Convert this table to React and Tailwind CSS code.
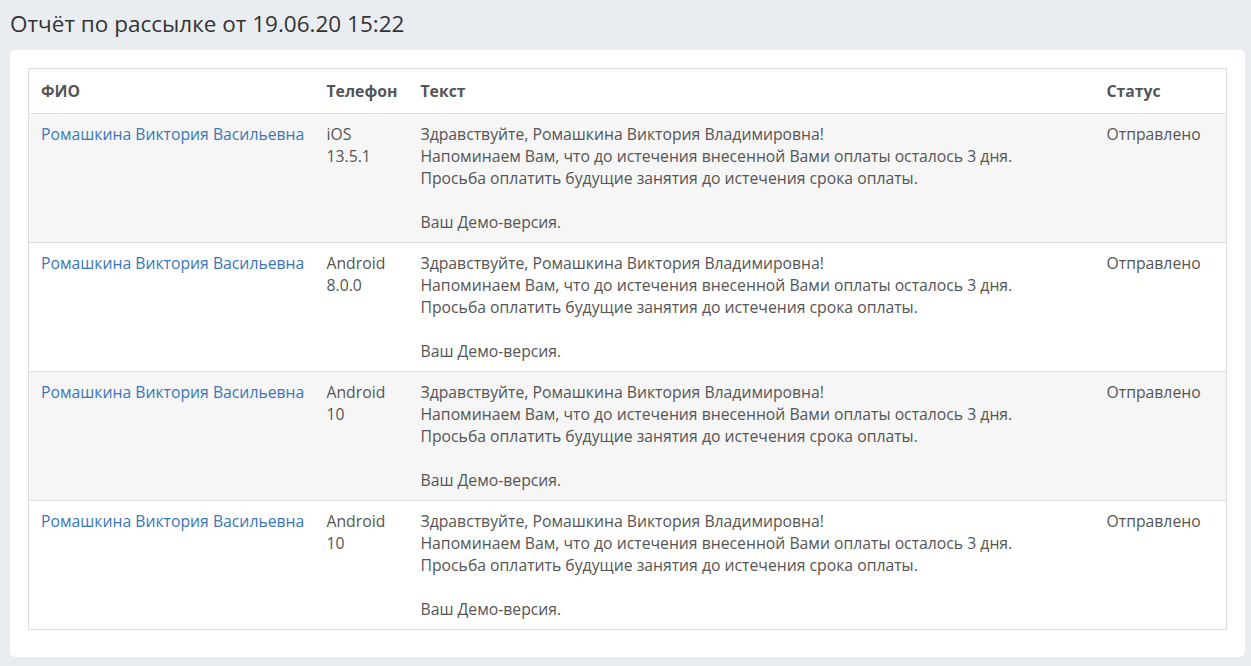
import React from "react";

const rows = [
  { phone: ["iOS", "13.5.1"] },
  { phone: ["Android", "8.0.0"] },
  { phone: ["Android", "10"] },
  { phone: ["Android", "10"] },
];

export default function App() {
  return (
    <div
      className="min-h-[666px] bg-[#e9ecf1] pl-[10px] pr-[6px] pb-[9px] text-[#555555]"
      style={{ fontFamily: '"Open Sans", "Liberation Sans", sans-serif' }}
    >
      <h1 className="pt-[7px] pb-[9px] text-[22.5px] leading-[34px] text-[#333333] font-normal">
        Отчёт по рассылке от 19.06.20 15:22
      </h1>
      <div className="rounded-[5px] bg-white px-[18px] pt-[18px] pb-[27px]">
        <table className="w-full table-fixed border-collapse border border-[#dddddd] text-[15.75px] leading-[22px]">
          <colgroup>
            <col className="w-[286px]" />
            <col className="w-[94px]" />
            <col />
            <col className="w-[132px]" />
          </colgroup>
          <thead>
            <tr className="border-b border-[#dddddd]">
              <th className="px-[12px] pt-[11px] pb-[11px] text-left font-bold">ФИО</th>
              <th className="px-[12px] pt-[11px] pb-[11px] text-left font-bold">Телефон</th>
              <th className="px-[12px] pt-[11px] pb-[11px] text-left font-bold">Текст</th>
              <th className="px-[12px] pt-[11px] pb-[11px] text-left font-bold">Статус</th>
            </tr>
          </thead>
          <tbody>
            {rows.map((r, i) => (
              <tr
                key={i}
                className={
                  (i % 2 === 0 ? "bg-[#f6f6f6] " : "bg-white ") +
                  "border-b border-[#dddddd] align-top"
                }
              >
                <td className="px-[12px] pt-[9px] pb-[9px] whitespace-nowrap">
                  <a className="text-[#3a76b8]">Ромашкина Виктория Васильевна</a>
                </td>
                <td className="px-[12px] pt-[9px] pb-[9px]">
                  {r.phone[0]}
                  <br />
                  {r.phone[1]}
                </td>
                <td className="px-[12px] pt-[9px] pb-[9px]">
                  Здравствуйте, Ромашкина Виктория Владимировна!
                  <br />
                  Напоминаем Вам, что до истечения внесенной Вами оплаты осталось 3 дня.
                  <br />
                  Просьба оплатить будущие занятия до истечения срока оплаты.
                  <br />
                  <br />
                  Ваш Демо-версия.
                </td>
                <td className="px-[12px] pt-[9px] pb-[9px]">Отправлено</td>
              </tr>
            ))}
          </tbody>
        </table>
      </div>
    </div>
  );
}
